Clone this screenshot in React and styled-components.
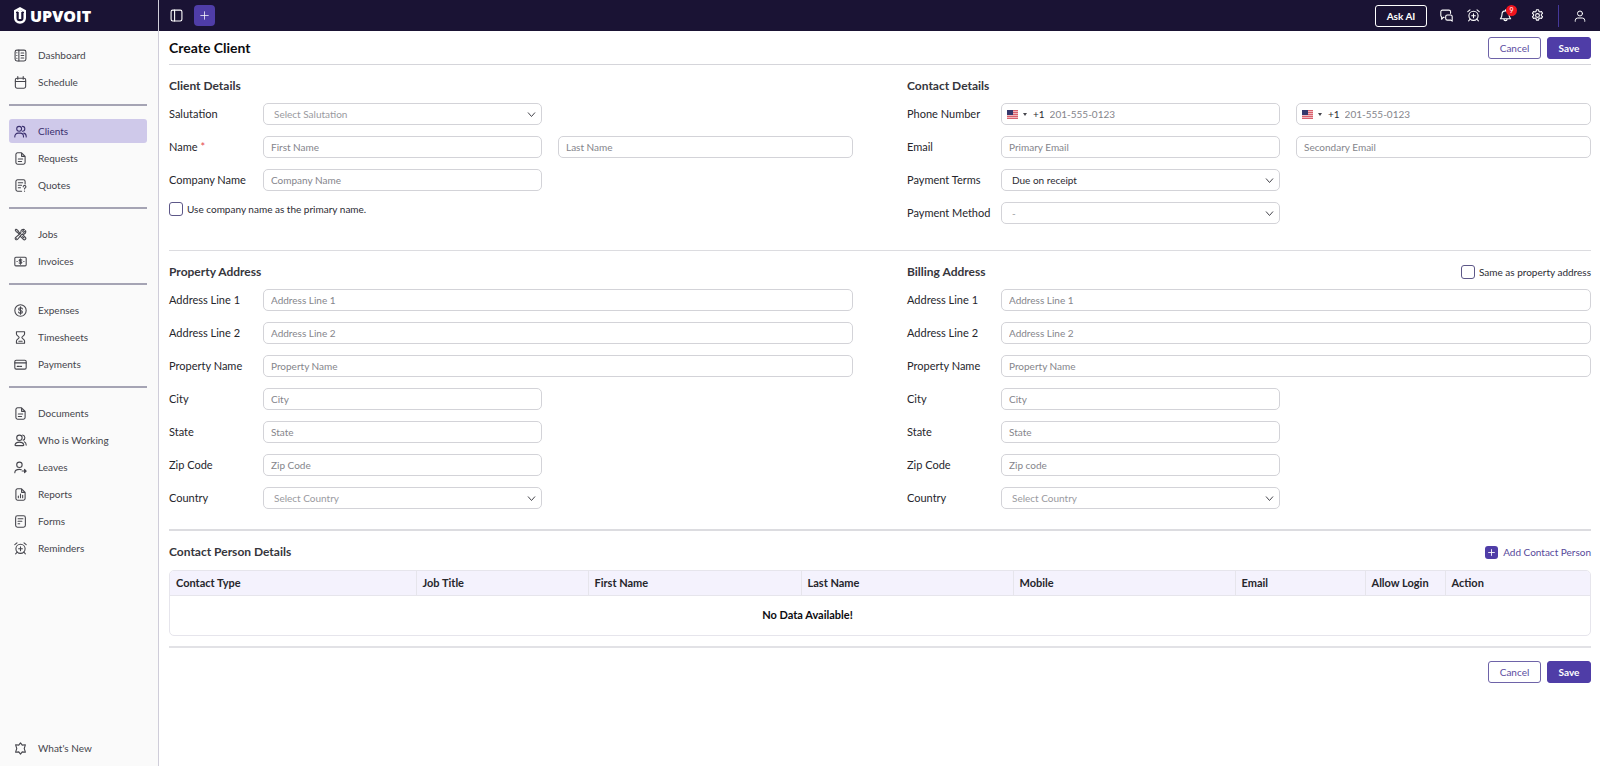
import React, { useState } from "react";
import styled, { createGlobalStyle } from "styled-components";
import { HiOutlineWrenchScrewdriver } from "react-icons/hi2";

const GlobalStyle = createGlobalStyle`
  * {
    box-sizing: border-box;
  }

  body {
    margin: 0;
    background: #fff;
    color: #2b2b33;
    font-family: "Lato", "Open Sans", sans-serif;
    font-size: 10px;
    line-height: 14px;
  }

  button, input, select {
    font: inherit;
    color: inherit;
  }
`;

const Layout = styled.div`
  display: grid;
  grid-template-columns: 159px 1fr;
  min-height: 100vh;
`;

// ------------------------ sidebar
const Sidebar = styled.aside`
  display: flex;
  flex-direction: column;
  background: #fafafa;
  border-right: 1px solid #cfcdd9;
`;

const Brand = styled.a`
  display: flex;
  align-items: center;
  gap: 3px;
  height: 31px;
  padding-left: 13px;
  background: #1a1334;
  color: #fff;
  font-family: "Open Sans", sans-serif;
  font-size: 16px;
  font-weight: 800;
  line-height: 20px;
  text-decoration: none;
`;

const Nav = styled.nav`
  display: flex;
  flex: 1;
  flex-direction: column;
  padding: 12px 11px 6px 9px;
`;

const NavGroup = styled.div`
  display: flex;
  flex-direction: column;
  gap: 3px;
`;

const NavDivider = styled.hr`
  width: 100%;
  height: 2px;
  margin: 10px 0 13px;
  border: none;
  background: #a5a4b4;
`;

const NavFooter = styled.div`
  margin-top: auto;
`;

const NavItem = styled.a`
  display: flex;
  align-items: center;
  gap: 11px;
  height: 24px;
  padding-left: 5px;
  border-radius: 3px;
  background: ${(props) => (props.$active ? "#cfc9ea" : "transparent")};
  color: ${(props) => (props.$active ? "#3a2f6e" : "#45454c")};
  text-decoration: none;
`;

// ------------------------ top bar
const Page = styled.div`
  display: flex;
  flex-direction: column;
  min-width: 0;
`;

const TopBar = styled.header`
  display: flex;
  align-items: center;
  justify-content: space-between;
  height: 31px;
  padding: 0 12px 0 9px;
  background: #1a1334;
  color: #fff;
`;

const TopGroup = styled.div`
  display: flex;
  align-items: center;
  gap: ${(props) => props.$gap};
`;

const IconButton = styled.button`
  position: relative;
  display: flex;
  align-items: center;
  justify-content: center;
  width: 16px;
  height: 22px;
  padding: 0;
  border: none;
  background: none;
  color: #fff;
  cursor: pointer;
`;

const AddButton = styled(IconButton)`
  width: 21px;
  height: 21px;
  border-radius: 4px;
  background: #4f3da7;
`;

const AskButton = styled.button`
  width: 52px;
  height: 22px;
  padding: 0;
  border: 1px solid #fff;
  border-radius: 3px;
  background: none;
  color: #fff;
  font-weight: 700;
  cursor: pointer;
`;

const Badge = styled.span`
  position: absolute;
  top: 0;
  right: -4px;
  width: 11px;
  height: 11px;
  border-radius: 50%;
  background: #f0141e;
  color: #fff;
  font-size: 7px;
  line-height: 11px;
  text-align: center;
`;

const Separator = styled.span`
  width: 1px;
  height: 22px;
  background: #45389a;
`;

// ------------------------ page content
const Content = styled.main`
  padding: 0 9px 0 10px;
`;

const TitleRow = styled.div`
  display: flex;
  align-items: center;
  justify-content: space-between;
  height: 34px;
  border-bottom: 1px solid #d5d5da;
`;

const Title = styled.h1`
  margin: 0;
  color: #0c0c10;
  font-size: 14px;
  font-weight: 700;
  line-height: 18px;
`;

const Actions = styled.div`
  display: flex;
  justify-content: flex-end;
  gap: 6px;
`;

const Button = styled.button`
  height: 22px;
  min-width: ${(props) => (props.$primary ? "44px" : "53px")};
  padding: 0;
  border: 1px solid ${(props) => (props.$primary ? "#4f3da7" : "#6e63a8")};
  border-radius: 3px;
  background: ${(props) => (props.$primary ? "#4f3da7" : "#fff")};
  color: ${(props) => (props.$primary ? "#fff" : "#5b4c9f")};
  font-weight: ${(props) => (props.$primary ? "700" : "400")};
  cursor: pointer;
`;

const Columns = styled.div`
  display: grid;
  grid-template-columns: 1fr 1fr;
  column-gap: 54px;
  padding: 14px 0 ${(props) => props.$bottom};
  border-bottom: ${(props) => props.$line} solid #dcdce0;
`;

const Section = styled.section`
  display: flex;
  flex-direction: column;
  gap: 11px;
`;

const SectionHead = styled.div`
  display: flex;
  align-items: center;
  justify-content: space-between;
  height: 13px;
`;

const SectionTitle = styled.h2`
  margin: 0;
  color: #36363c;
  font-size: 12px;
  font-weight: 700;
  line-height: 14px;
`;

const Row = styled.div`
  display: grid;
  grid-template-columns: 94px 1fr 1fr;
  align-items: center;
`;

const Label = styled.label`
  color: #26262c;
  font-size: 11px;
`;

const Required = styled.span`
  color: #e5484d;
`;

const Cell = styled.div`
  position: relative;
  grid-column: ${(props) => (props.$wide ? "span 2" : "auto")};
  margin-right: ${(props) => (props.$gap ? "16px" : "0")};
`;

const Input = styled.input`
  display: block;
  width: 100%;
  height: 22px;
  padding: 0 7px;
  border: 1px solid #d3d3d8;
  border-radius: 5px;
  background: #fff;
  outline: none;

  &::placeholder {
    color: #85858b;
    opacity: 1;
  }
`;

const Select = styled.select`
  display: block;
  width: 100%;
  height: 22px;
  padding: 0 24px 0 10px;
  border: 1px solid #d3d3d8;
  border-radius: 5px;
  background: #fff;
  color: ${(props) => (props.$empty ? "#9a9aa0" : "#2b2b33")};
  appearance: none;
  outline: none;
`;

const Chevron = styled.svg`
  position: absolute;
  top: 7px;
  right: 6px;
  width: 9px;
  height: 9px;
  pointer-events: none;
`;

const PhoneBox = styled.div`
  display: flex;
  align-items: center;
  height: 22px;
  padding-left: 5px;
  border: 1px solid #d3d3d8;
  border-radius: 5px;
`;

const CountryButton = styled.button`
  display: flex;
  align-items: center;
  gap: 5px;
  padding: 0;
  border: none;
  background: none;
`;

const DialCode = styled.span`
  margin: 0 5px 0 6px;
`;

const PhoneInput = styled(Input)`
  flex: 1;
  min-width: 0;
  height: 20px;
  padding: 0;
  border: none;
`;

const CheckLabel = styled.label`
  display: flex;
  align-items: center;
  gap: 4px;
`;

const Checkbox = styled.input`
  width: 14px;
  height: 14px;
  margin: 0;
  border: 1px solid #5d5788;
  border-radius: 3px;
  background: #fff;
  appearance: none;

  &:checked {
    background: #4f3da7;
  }
`;

const ContactSection = styled.section`
  padding: 11px 0 10px;
  border-bottom: 2px solid #e2e2e6;
`;

const ContactHead = styled.div`
  display: flex;
  align-items: center;
  justify-content: space-between;
  height: 20px;
  margin-bottom: 8px;
`;

const AddContact = styled.button`
  display: flex;
  align-items: center;
  gap: 5px;
  padding: 0;
  border: none;
  background: none;
  color: #56489a;
  cursor: pointer;
`;

const TableBox = styled.div`
  overflow: hidden;
  border: 1px solid #e6e5ec;
  border-radius: 5px;
`;

const Table = styled.table`
  width: 100%;
  border-collapse: collapse;
  table-layout: fixed;
  font-size: 11px;
`;

const Th = styled.th`
  width: ${(props) => props.$width};
  height: 24px;
  padding: 0 6px;
  border-right: 1px solid #e6e5ec;
  border-bottom: 1px solid #e6e5ec;
  background: #f4f2fd;
  color: #26262c;
  font-weight: 700;
  text-align: left;

  &:last-child {
    border-right: none;
  }
`;

const EmptyCell = styled.td`
  height: 40px;
  padding: 0;
  color: #0c0c10;
  font-weight: 700;
  text-align: center;
`;

const Footer = styled.div`
  padding: 13px 0;
`;

// ------------------------ drawings
const ICONS = {
  dashboard: (
    <>
      <rect x="2" y="2" width="20" height="20" rx="3.5" />
      <path d="M9 2v20M13 7.5h5M13 12h5M13 16.5h5M5 7h.5M5 12h.5M5 17h.5" />
    </>
  ),
  calendar: (
    <>
      <rect x="2.5" y="4" width="19" height="18.5" rx="3" />
      <path d="M2.5 10h19M7 1v5M17 1v5" />
    </>
  ),
  clients: (
    <>
      <circle cx="9.5" cy="7" r="4.5" />
      <path d="M1.5 22v-1a6 6 0 0 1 6-6h4a6 6 0 0 1 6 6v1" />
      <path d="M15.5 2.500a4.5 4.5 0 0 1 0 9M18 15a6 6 0 0 1 4.5 6v1" />
    </>
  ),
  file: (
    <path d="M14 1.500H6.500a3 3 0 0 0-3 3v15a3 3 0 0 0 3 3h11a3 3 0 0 0 3-3V8zM14 1.500V8h6.500M8 13h8M8 17.500h6" />
  ),
  quote: (
    <>
      <path d="M20.500 9V4.500a3 3 0 0 0-3-3h-11a3 3 0 0 0-3 3v15a3 3 0 0 0 3 3H14M8 7h8M8 11.500h6M8 16h4" />
      <path d="M17 14.500a2.500 2.500 0 1 1 3.500 2.300c-.8.4-1 .8-1 1.700M19.500 22v.5" />
    </>
  ),
  invoice: (
    <>
      <rect x="1.5" y="4" width="21" height="16" rx="2" />
      <path d="M14.500 9.500c-.5-.8-1.400-1-2.500-1-1.500 0-2.500.7-2.500 1.700 0 2.500 5 1.200 5 3.700 0 1-1 1.700-2.500 1.700-1.200 0-2-.4-2.500-1.100M12 7v10M5.500 12h.5M18 12h.5" />
    </>
  ),
  dollar: (
    <>
      <circle cx="12" cy="12" r="10.5" />
      <path d="M15.500 9c-.4-1.200-1.700-2-3.500-2-2 0-3.500.9-3.500 2.400 0 3.600 7 1.600 7 5.200 0 1.500-1.500 2.400-3.500 2.400-1.900 0-3.200-.8-3.600-2.100M12 5v14" />
    </>
  ),
  hourglass: (
    <path d="M4.500 1.500h15v4c0 3-5 4.500-5 6.500s5 3.500 5 6.500v4h-15v-4c0-3 5-4.500 5-6.500s-5-3.500-5-6.500zM9 19h6" />
  ),
  card: (
    <>
      <rect x="1.5" y="4" width="21" height="16.5" rx="2.500" />
      <path d="M1.500 9h21M6 15.500h4M12 15.500h2" />
    </>
  ),
  working: (
    <>
      <circle cx="10" cy="7" r="5" />
      <path d="M2 19.500c1-3 4-4.500 8-4.500s7 1.500 8 4.500c.3 1.300-.4 2-1.500 2h-13c-1.100 0-1.800-.7-1.500-2z" />
      <path d="M16 2a5 5 0 0 1 1 9.500M19 14.500c2 .8 3.500 2.500 3.500 6" />
    </>
  ),
  leaves: (
    <>
      <circle cx="10" cy="7" r="5" />
      <path d="M1.500 21.500c0-4 3.500-6 8.500-6 1.500 0 2.500.1 3.500.5M15 18.500h7.500M19.500 15.500l3 3-3 3z" />
    </>
  ),
  report: (
    <path d="M14 1.500H6.500a3 3 0 0 0-3 3v15a3 3 0 0 0 3 3h11a3 3 0 0 0 3-3V8zM14 1.500V8h6.500M8 18v-3M12 18v-7M16 18v-4.500" />
  ),
  form: (
    <>
      <rect x="3" y="1.5" width="18" height="21" rx="3.5" />
      <path d="M7.500 7h9M7.500 11.500h7M7.500 16h3" />
    </>
  ),
  alarm: (
    <>
      <circle cx="12" cy="12.5" r="8.5" />
      <path d="M12 9v7M8.500 12.500h7M5.500 1.500l-4 3.500M18.500 1.500l4 3.500M6 18.500L3 22M18 18.500l3 3.500" />
    </>
  ),
  star: (
    <path d="M12 1.500l3.200 4.200 5.800-.5-2.100 6.800 2.100 6.800-5.800-.5L12 22.500l-3.200-4.200-5.800.5L5.100 12 3 5.200l5.800.5z" />
  ),
  panel: (
    <>
      <rect x="2" y="2" width="20" height="20" rx="3" />
      <path d="M8.500 2v20" />
    </>
  ),
  plus: <path d="M12 2v20M2 12h20" />,
  chat: (
    <>
      <path d="M7.500 15.500H6L3 19v-4.500A3 3 0 0 1 1.500 12V5a3 3 0 0 1 3-3h12a3 3 0 0 1 3 3v3" />
      <path d="M13.500 11h6a3 3 0 0 1 3 3v8.500l-2.500-2h-6.500a3 3 0 0 1-3-3V14a3 3 0 0 1 3-3z" />
    </>
  ),
  bell: (
    <path d="M12 1.500v2M5.500 10a6.500 6.500 0 0 1 13 0c0 4.500 1.500 6 3 8h-19c1.500-2 3-3.500 3-8zM9 18.500a3 3 0 0 0 6 0" />
  ),
  gear: (
    <>
      <circle cx="12" cy="12" r="3.5" />
      <path d="M10 1.500h4l.6 2.900 1.900 1.100 2.800-1 2 3.500-2.200 2v2.200l2.200 1.900-2 3.500-2.800-1-1.900 1.100-.6 2.900h-4l-.6-2.900-1.900-1.100-2.800 1-2-3.500 2.200-1.900v-2.200L2.700 8l2-3.500 2.800 1 1.900-1.100z" />
    </>
  ),
  user: (
    <>
      <circle cx="12" cy="7" r="5" />
      <path d="M2.500 22.500V21a5 5 0 0 1 5-5h9a5 5 0 0 1 5 5v1.500" />
    </>
  ),
};

const IconSvg = styled.svg`
  flex: none;
  width: ${(props) => props.$size}px;
  height: ${(props) => props.$size}px;
  fill: none;
  stroke: currentColor;
  stroke-width: ${(props) => props.$stroke};
  stroke-linecap: round;
  stroke-linejoin: round;
`;

const PlusTile = styled.span`
  display: flex;
  align-items: center;
  justify-content: center;
  width: 13px;
  height: 13px;
  border-radius: 3px;
  background: #4f3da7;
  color: #fff;
`;

function Icon({ name, size = 13, stroke = 2 }) {
  if (name === "tools") {
    return <HiOutlineWrenchScrewdriver size={size} strokeWidth={stroke} />;
  }
  return (
    <IconSvg $size={size} $stroke={stroke} viewBox="0 0 24 24" aria-hidden="true">
      {ICONS[name]}
    </IconSvg>
  );
}

function Logo() {
  return (
    <svg width="14" height="17" viewBox="0 0 28 34" aria-hidden="true">
      <path d="M14 0l12 6.500V14l-4-1.500V10l-8-4-8 4v2.500L2 14V6.500z" fill="#fff" />
      <path
        d="M4.500 12v10c0 5 3.500 9 9.500 9s9.500-4 9.500-9V12"
        fill="none"
        stroke="#fff"
        strokeWidth="5"
      />
      <path d="M14 5l6 5h-3.500v14h-5V10H8z" fill="#fff" />
    </svg>
  );
}

function Flag() {
  return (
    <svg width="11" height="9" viewBox="0 0 22 18" aria-hidden="true">
      <rect width="22" height="18" fill="#efb9be" />
      <path
        d="M0 1h22M0 5h22M0 9h22M0 13h22M0 17h22"
        stroke="#d9606d"
        strokeWidth="2"
      />
      <rect width="12" height="10" fill="#35386c" />
    </svg>
  );
}

// ------------------------ data
const NAV = [
  [
    ["Dashboard", "dashboard"],
    ["Schedule", "calendar"],
  ],
  [
    ["Clients", "clients"],
    ["Requests", "file"],
    ["Quotes", "quote"],
  ],
  [
    ["Jobs", "tools"],
    ["Invoices", "invoice"],
  ],
  [
    ["Expenses", "dollar"],
    ["Timesheets", "hourglass"],
    ["Payments", "card"],
  ],
  [
    ["Documents", "file"],
    ["Who is Working", "working"],
    ["Leaves", "leaves"],
    ["Reports", "report"],
    ["Forms", "form"],
    ["Reminders", "alarm"],
  ],
];

const TABLE_COLUMNS = [
  ["Contact Type", "246px"],
  ["Job Title", "172px"],
  ["First Name", "213px"],
  ["Last Name", "212px"],
  ["Mobile", "222px"],
  ["Email", "130px"],
  ["Allow Login", "80px"],
  ["Action", "auto"],
];

// ------------------------ form parts
function SelectField({ id, options, placeholder }) {
  const [value, setValue] = useState(placeholder ? "" : options[0]);

  return (
    <Cell $gap>
      <Select
        id={id}
        value={value}
        $empty={value === ""}
        onChange={(e) => setValue(e.target.value)}
      >
        {placeholder && <option value="">{placeholder}</option>}
        {options.map((option) => (
          <option key={option}>{option}</option>
        ))}
      </Select>
      <Chevron viewBox="0 0 18 18" aria-hidden="true">
        <path d="M2 5l7 8 7-8" fill="none" stroke="#45454c" strokeWidth="2" />
      </Chevron>
    </Cell>
  );
}

function PhoneField({ id, label, gap }) {
  return (
    <Cell $gap={gap}>
      <PhoneBox>
        <CountryButton type="button" aria-label="Country code">
          <Flag />
          <svg width="4" height="3" viewBox="0 0 4 3" aria-hidden="true">
            <path d="M0 0h4L2 3z" fill="#45454c" />
          </svg>
        </CountryButton>
        <DialCode>+1</DialCode>
        <PhoneInput
          id={id}
          type="tel"
          placeholder="201-555-0123"
          aria-label={label}
        />
      </PhoneBox>
    </Cell>
  );
}

function AddressFields({ prefix, zipPlaceholder }) {
  const wide = [
    ["Address Line 1", "line1"],
    ["Address Line 2", "line2"],
    ["Property Name", "property"],
  ];
  const narrow = [
    ["City", "city", "City"],
    ["State", "state", "State"],
    ["Zip Code", "zip", zipPlaceholder],
  ];

  return (
    <>
      {wide.map(([label, key]) => (
        <Row key={key}>
          <Label htmlFor={`${prefix}-${key}`}>{label}</Label>
          <Cell $wide>
            <Input id={`${prefix}-${key}`} placeholder={label} />
          </Cell>
        </Row>
      ))}
      {narrow.map(([label, key, placeholder]) => (
        <Row key={key}>
          <Label htmlFor={`${prefix}-${key}`}>{label}</Label>
          <Cell $gap>
            <Input id={`${prefix}-${key}`} placeholder={placeholder} />
          </Cell>
        </Row>
      ))}
      <Row>
        <Label htmlFor={`${prefix}-country`}>Country</Label>
        <SelectField
          id={`${prefix}-country`}
          placeholder="Select Country"
          options={["United States", "Canada"]}
        />
      </Row>
    </>
  );
}

function FormActions() {
  return (
    <Actions>
      <Button type="button">Cancel</Button>
      <Button type="button" $primary>
        Save
      </Button>
    </Actions>
  );
}

function App() {
  return (
    <>
      <GlobalStyle />
      <Layout>
        <Sidebar>
          <Brand href="#">
            <Logo />
            UPVOIT
          </Brand>
          <Nav>
            {NAV.map((group, index) => (
              <React.Fragment key={index}>
                {index > 0 && <NavDivider />}
                <NavGroup>
                  {group.map(([label, icon]) => (
                    <NavItem key={label} href="#" $active={label === "Clients"}>
                      <Icon name={icon} />
                      {label}
                    </NavItem>
                  ))}
                </NavGroup>
              </React.Fragment>
            ))}
            <NavFooter>
              <NavItem href="#">
                <Icon name="star" />
                What's New
              </NavItem>
            </NavFooter>
          </Nav>
        </Sidebar>

        <Page>
          <TopBar>
            <TopGroup $gap="10px">
              <IconButton aria-label="Toggle sidebar">
                <Icon name="panel" />
              </IconButton>
              <AddButton aria-label="Create">
                <Icon name="plus" size={9} />
              </AddButton>
            </TopGroup>
            <TopGroup $gap="13px">
              <TopGroup $gap="16px">
                <TopGroup $gap="11px">
                  <AskButton>Ask AI</AskButton>
                  <IconButton aria-label="Messages">
                    <Icon name="chat" />
                  </IconButton>
                  <IconButton aria-label="Reminders">
                    <Icon name="alarm" />
                  </IconButton>
                </TopGroup>
                <IconButton aria-label="Notifications">
                  <Icon name="bell" />
                  <Badge>9</Badge>
                </IconButton>
                <IconButton aria-label="Settings">
                  <Icon name="gear" />
                </IconButton>
              </TopGroup>
              <Separator />
              <IconButton aria-label="Account">
                <Icon name="user" size={12} />
              </IconButton>
            </TopGroup>
          </TopBar>

          <Content>
            <TitleRow>
              <Title>Create Client</Title>
              <FormActions />
            </TitleRow>

            <Columns $bottom="26px" $line="1px">
              <Section>
                <SectionHead>
                  <SectionTitle>Client Details</SectionTitle>
                </SectionHead>
                <Row>
                  <Label htmlFor="salutation">Salutation</Label>
                  <SelectField
                    id="salutation"
                    placeholder="Select Salutation"
                    options={["Mr.", "Mrs.", "Ms."]}
                  />
                </Row>
                <Row>
                  <Label htmlFor="first-name">
                    Name <Required>*</Required>
                  </Label>
                  <Cell $gap>
                    <Input id="first-name" placeholder="First Name" />
                  </Cell>
                  <Cell>
                    <Input placeholder="Last Name" aria-label="Last Name" />
                  </Cell>
                </Row>
                <Row>
                  <Label htmlFor="company">Company Name</Label>
                  <Cell $gap>
                    <Input id="company" placeholder="Company Name" />
                  </Cell>
                </Row>
                <CheckLabel>
                  <Checkbox type="checkbox" />
                  Use company name as the primary name.
                </CheckLabel>
              </Section>

              <Section>
                <SectionHead>
                  <SectionTitle>Contact Details</SectionTitle>
                </SectionHead>
                <Row>
                  <Label htmlFor="phone">Phone Number</Label>
                  <PhoneField id="phone" label="Phone Number" gap />
                  <PhoneField id="phone-2" label="Secondary Phone Number" />
                </Row>
                <Row>
                  <Label htmlFor="email">Email</Label>
                  <Cell $gap>
                    <Input id="email" type="email" placeholder="Primary Email" />
                  </Cell>
                  <Cell>
                    <Input
                      type="email"
                      placeholder="Secondary Email"
                      aria-label="Secondary Email"
                    />
                  </Cell>
                </Row>
                <Row>
                  <Label htmlFor="terms">Payment Terms</Label>
                  <SelectField
                    id="terms"
                    options={["Due on receipt", "Net 15", "Net 30"]}
                  />
                </Row>
                <Row>
                  <Label htmlFor="method">Payment Method</Label>
                  <SelectField
                    id="method"
                    placeholder="-"
                    options={["Cash", "Card"]}
                  />
                </Row>
              </Section>
            </Columns>

            <Columns $bottom="20px" $line="2px">
              <Section>
                <SectionHead>
                  <SectionTitle>Property Address</SectionTitle>
                </SectionHead>
                <AddressFields prefix="property" zipPlaceholder="Zip Code" />
              </Section>
              <Section>
                <SectionHead>
                  <SectionTitle>Billing Address</SectionTitle>
                  <CheckLabel>
                    <Checkbox type="checkbox" />
                    Same as property address
                  </CheckLabel>
                </SectionHead>
                <AddressFields prefix="billing" zipPlaceholder="Zip code" />
              </Section>
            </Columns>

            <ContactSection>
              <ContactHead>
                <SectionTitle>Contact Person Details</SectionTitle>
                <AddContact type="button">
                  <PlusTile>
                    <Icon name="plus" size={7} stroke={3} />
                  </PlusTile>
                  Add Contact Person
                </AddContact>
              </ContactHead>
              <TableBox>
                <Table>
                  <thead>
                    <tr>
                      {TABLE_COLUMNS.map(([name, width]) => (
                        <Th key={name} $width={width}>
                          {name}
                        </Th>
                      ))}
                    </tr>
                  </thead>
                  <tbody>
                    <tr>
                      <EmptyCell colSpan={7}>No Data Available!</EmptyCell>
                      <td />
                    </tr>
                  </tbody>
                </Table>
              </TableBox>
            </ContactSection>

            <Footer>
              <FormActions />
            </Footer>
          </Content>
        </Page>
      </Layout>
    </>
  );
}

export default App;
